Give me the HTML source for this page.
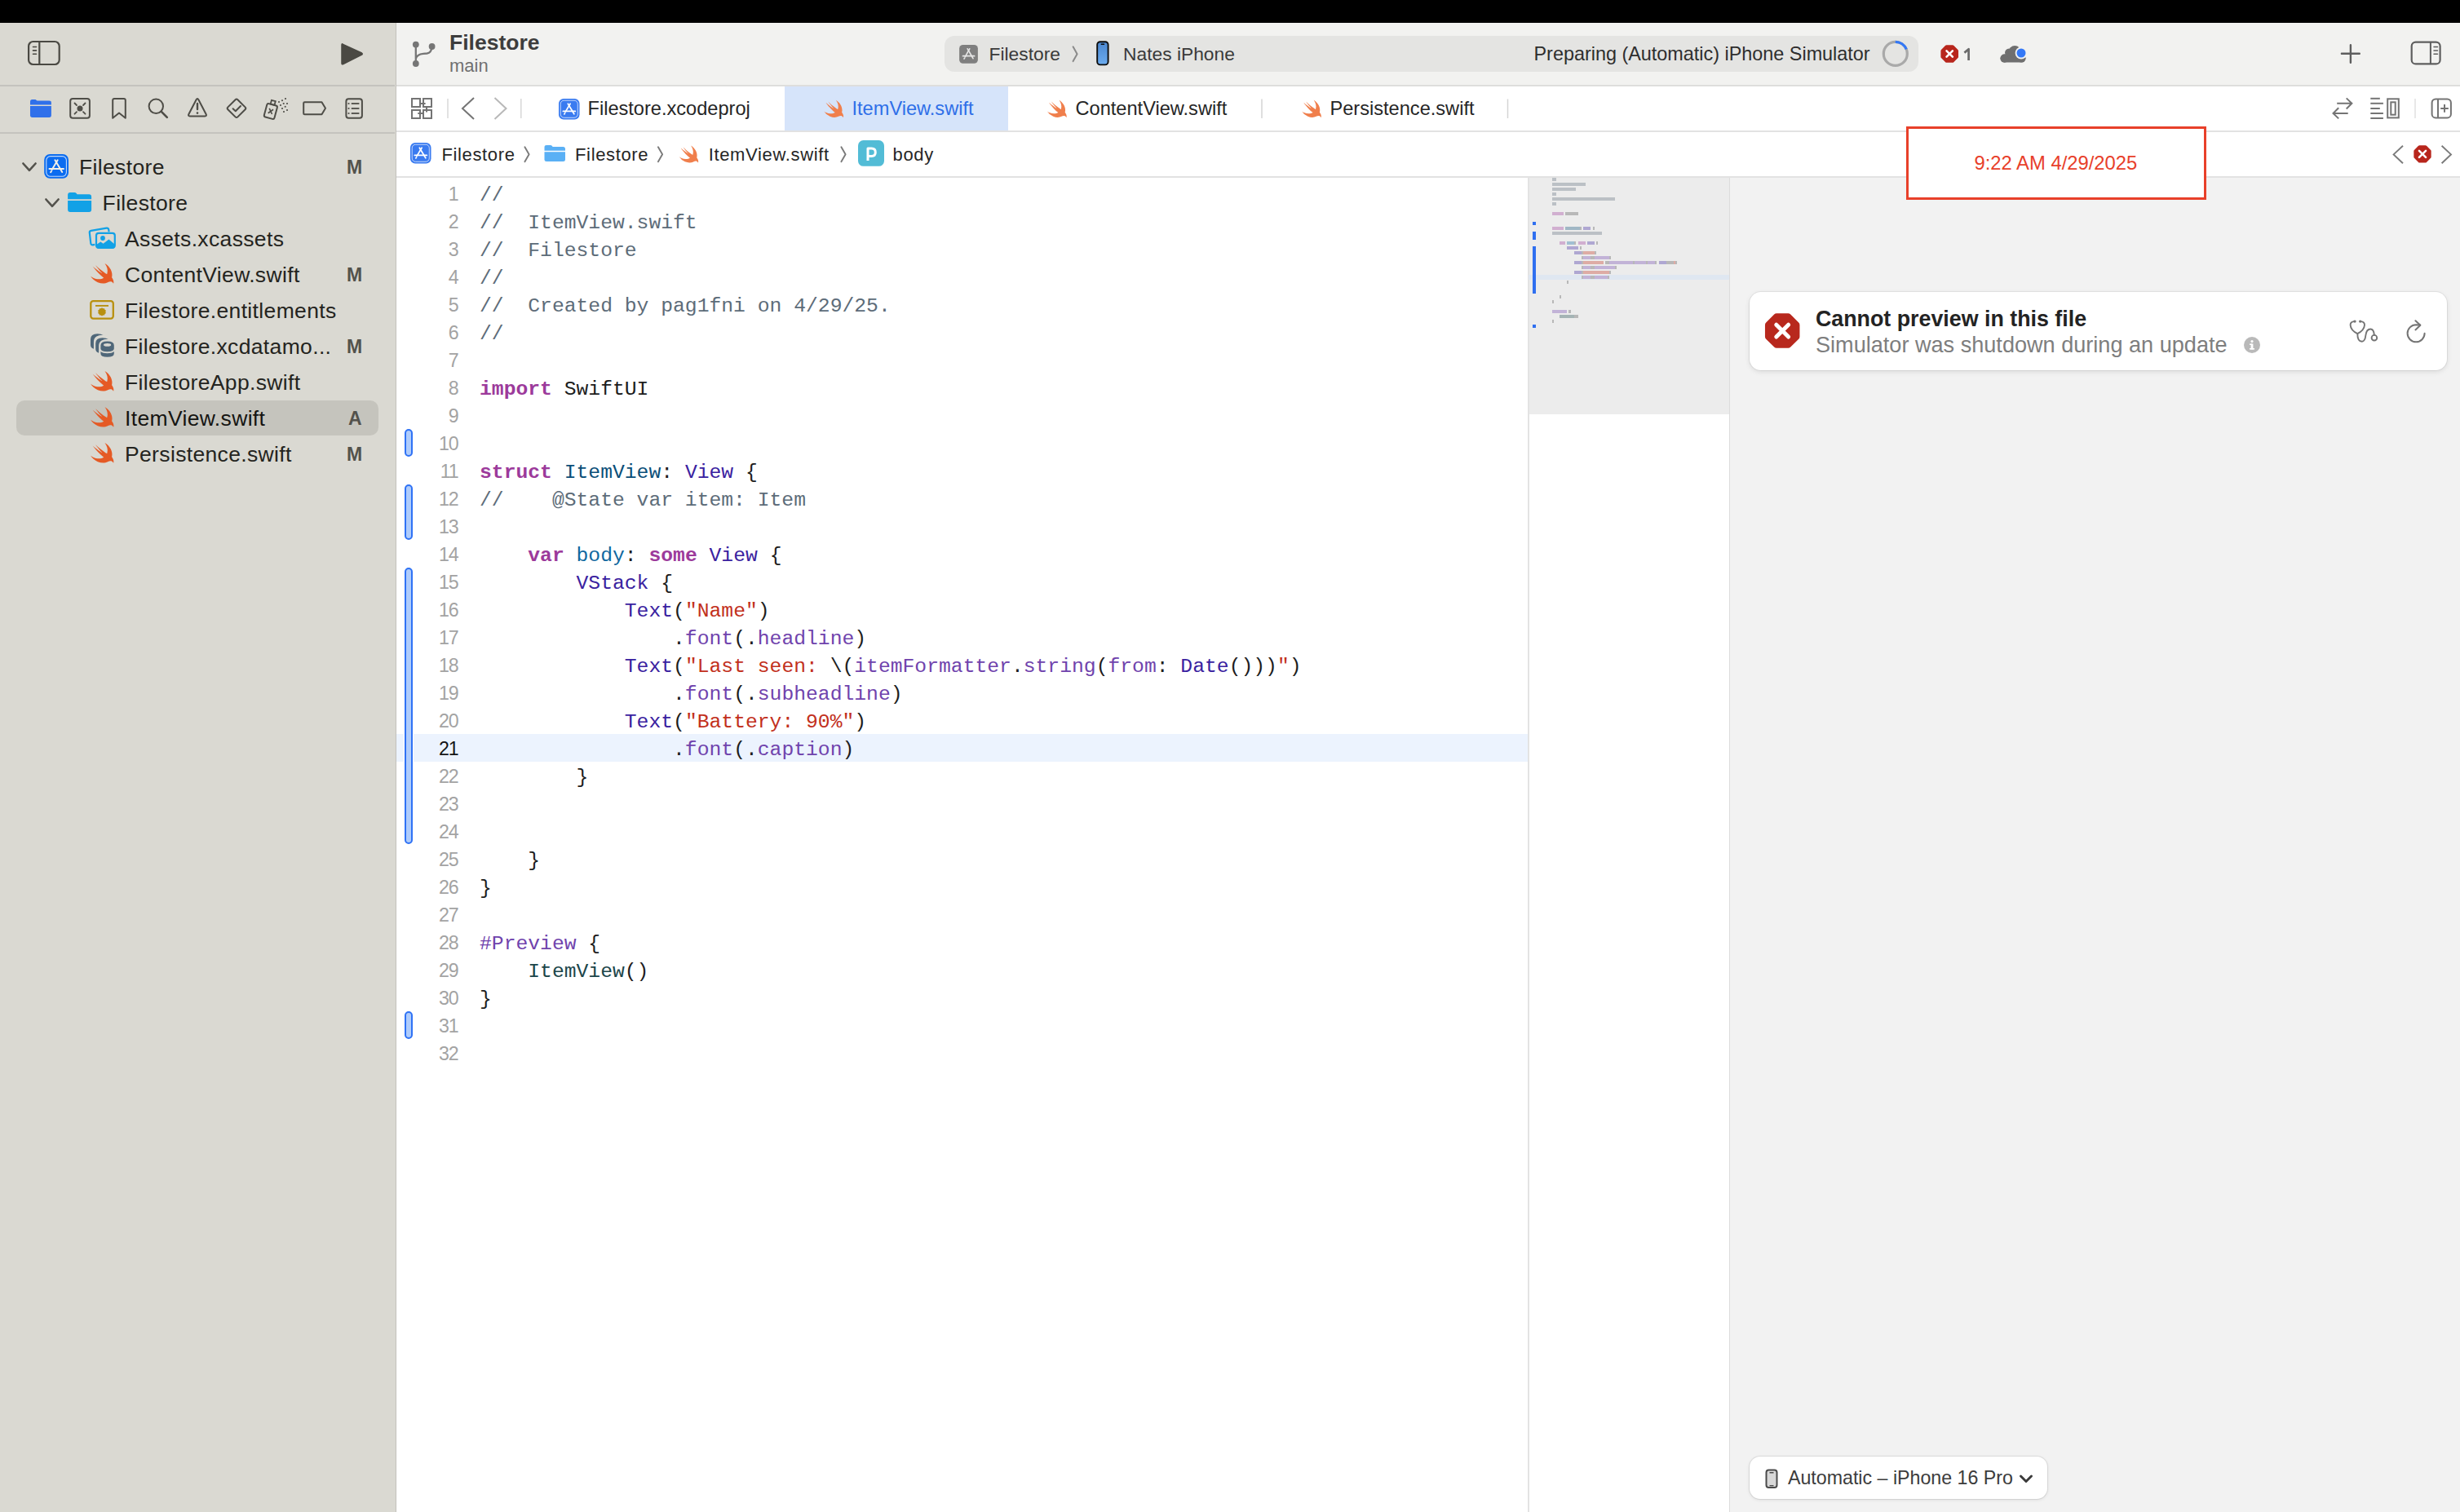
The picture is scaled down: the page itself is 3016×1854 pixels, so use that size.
<!DOCTYPE html><html><head><meta charset="utf-8"><style>
html,body{margin:0;padding:0;width:3016px;height:1854px;overflow:hidden;background:#fff;}
.t{position:absolute;white-space:pre;}
.s{font-family:"Liberation Sans",sans-serif;}
.m{font-family:"Liberation Mono",monospace;}
body{font-family:"Liberation Sans",sans-serif;}
svg{overflow:visible}
</style></head><body>
<div style="position:absolute;left:0px;top:0px;width:3016px;height:28px;background:#000;"></div>
<div style="position:absolute;left:0px;top:28px;width:485px;height:1826px;background:#dad9d2;"></div>
<div style="position:absolute;left:485px;top:28px;width:1px;height:1826px;background:#c2c1bc;"></div>
<div style="position:absolute;left:0px;top:104px;width:484px;height:2px;background:#c4c3be;"></div>
<div style="position:absolute;left:0px;top:162px;width:484px;height:2px;background:#c4c3be;"></div>
<div style="position:absolute;left:486px;top:28px;width:2530px;height:76px;background:#f2f2f0;"></div>
<div style="position:absolute;left:486px;top:104px;width:2530px;height:2px;background:#dededc;"></div>
<div style="position:absolute;left:486px;top:106px;width:2530px;height:54px;background:#ffffff;"></div>
<div style="position:absolute;left:962px;top:106px;width:274px;height:54px;background:#d6e4fa;"></div>
<div style="position:absolute;left:486px;top:160px;width:2530px;height:2px;background:#e2e2e2;"></div>
<div style="position:absolute;left:486px;top:162px;width:2530px;height:54px;background:#ffffff;"></div>
<div style="position:absolute;left:486px;top:216px;width:2530px;height:2px;background:#e2e2e2;"></div>
<div style="position:absolute;left:486px;top:218px;width:1387px;height:1636px;background:#ffffff;"></div>
<div style="position:absolute;left:1873px;top:218px;width:2px;height:1636px;background:#e3e3e3;"></div>
<div style="position:absolute;left:1875px;top:218px;width:245px;height:290px;background:#ececec;"></div>
<div style="position:absolute;left:1875px;top:508px;width:245px;height:1346px;background:#ffffff;"></div>
<div style="position:absolute;left:2120px;top:218px;width:1px;height:1636px;background:#dcdcdc;"></div>
<div style="position:absolute;left:2121px;top:218px;width:895px;height:1636px;background:#f2f2f2;"></div>
<div style="position:absolute;left:20px;top:490.5px;width:444px;height:43px;background:#c5c4bd;border-radius:10px;"></div>
<div class="t s" style="left:97px;top:191.56px;font-size:26.5px;line-height:26.5px;color:#242420;font-weight:400;letter-spacing:0.35px;">Filestore</div>
<div class="t s" style="left:425px;top:193.52px;font-size:23px;line-height:23px;color:#53524c;font-weight:700;">M</div>
<div class="t s" style="left:125.6px;top:235.56px;font-size:26.5px;line-height:26.5px;color:#242420;font-weight:400;letter-spacing:0.35px;">Filestore</div>
<div class="t s" style="left:153px;top:279.56px;font-size:26.5px;line-height:26.5px;color:#242420;font-weight:400;letter-spacing:0.35px;">Assets.xcassets</div>
<div class="t s" style="left:153px;top:323.56px;font-size:26.5px;line-height:26.5px;color:#242420;font-weight:400;letter-spacing:0.35px;">ContentView.swift</div>
<div class="t s" style="left:425px;top:325.52px;font-size:23px;line-height:23px;color:#53524c;font-weight:700;">M</div>
<div class="t s" style="left:153px;top:367.56px;font-size:26.5px;line-height:26.5px;color:#242420;font-weight:400;letter-spacing:0.35px;">Filestore.entitlements</div>
<div class="t s" style="left:153px;top:411.56px;font-size:26.5px;line-height:26.5px;color:#242420;font-weight:400;letter-spacing:0.35px;">Filestore.xcdatamo...</div>
<div class="t s" style="left:425px;top:413.52px;font-size:23px;line-height:23px;color:#53524c;font-weight:700;">M</div>
<div class="t s" style="left:153px;top:455.56px;font-size:26.5px;line-height:26.5px;color:#242420;font-weight:400;letter-spacing:0.35px;">FilestoreApp.swift</div>
<div class="t s" style="left:153px;top:499.56px;font-size:26.5px;line-height:26.5px;color:#151512;font-weight:400;letter-spacing:0.35px;">ItemView.swift</div>
<div class="t s" style="left:427px;top:501.52px;font-size:23px;line-height:23px;color:#53524c;font-weight:700;">A</div>
<div class="t s" style="left:153px;top:543.56px;font-size:26.5px;line-height:26.5px;color:#242420;font-weight:400;letter-spacing:0.35px;">Persistence.swift</div>
<div class="t s" style="left:425px;top:545.52px;font-size:23px;line-height:23px;color:#53524c;font-weight:700;">M</div>
<div class="t s" style="left:551px;top:39.06px;font-size:26.5px;line-height:26.5px;color:#3d3d3d;font-weight:700;">Filestore</div>
<div class="t s" style="left:551px;top:70.37px;font-size:22px;line-height:22px;color:#707070;font-weight:400;">main</div>
<div style="position:absolute;left:1158px;top:44px;width:1194px;height:44px;background:#e4e4e2;border-radius:12px;"></div>
<div class="t s" style="left:1212.5px;top:55.19px;font-size:22.8px;line-height:22.8px;color:#3a3a3a;font-weight:400;">Filestore</div>
<div class="t s" style="left:1377px;top:55.19px;font-size:22.8px;line-height:22.8px;color:#3a3a3a;font-weight:400;">Nates iPhone</div>
<div class="t s" style="left:1880.5px;top:54.68px;font-size:23.4px;line-height:23.4px;color:#2e2e2e;font-weight:400;">Preparing (Automatic) iPhone Simulator</div>
<div class="t s" style="left:720.5px;top:121.52px;font-size:23.6px;line-height:23.6px;color:#262626;font-weight:400;">Filestore.xcodeproj</div>
<div class="t s" style="left:1044.5px;top:121.52px;font-size:23.6px;line-height:23.6px;color:#2f6fe8;font-weight:400;">ItemView.swift</div>
<div class="t s" style="left:1318.5px;top:121.52px;font-size:23.6px;line-height:23.6px;color:#262626;font-weight:400;">ContentView.swift</div>
<div class="t s" style="left:1630.5px;top:121.52px;font-size:23.6px;line-height:23.6px;color:#262626;font-weight:400;">Persistence.swift</div>
<div class="t s" style="left:541.4px;top:178.87px;font-size:22px;line-height:22px;color:#262626;font-weight:400;letter-spacing:0.65px;">Filestore</div>
<div class="t s" style="left:705px;top:178.87px;font-size:22px;line-height:22px;color:#262626;font-weight:400;letter-spacing:0.65px;">Filestore</div>
<div class="t s" style="left:868.7px;top:178.87px;font-size:22px;line-height:22px;color:#262626;font-weight:400;letter-spacing:0.65px;">ItemView.swift</div>
<div class="t s" style="left:1094.5px;top:178.87px;font-size:22px;line-height:22px;color:#262626;font-weight:400;letter-spacing:0.65px;">body</div>
<div style="position:absolute;left:486px;top:900px;width:9px;height:34px;background:#ecf3fe;"></div>
<div style="position:absolute;left:507px;top:900px;width:1366px;height:34px;background:#ecf3fe;"></div>
<div class="t m" style="left:588px;top:227.08px;font-size:24.7px;line-height:24.7px;color:#1d1d1d;font-weight:400;"><span style="color:#5d6c79;">//</span></div>
<div class="t s" style="left:461.5px;width:100px;text-align:right;top:227.35px;font-size:23.2px;line-height:23.2px;letter-spacing:-1.2px;color:#a3a3a3">1</div>
<div class="t m" style="left:588px;top:261.08px;font-size:24.7px;line-height:24.7px;color:#1d1d1d;font-weight:400;"><span style="color:#5d6c79;">//  ItemView.swift</span></div>
<div class="t s" style="left:461.5px;width:100px;text-align:right;top:261.35px;font-size:23.2px;line-height:23.2px;letter-spacing:-1.2px;color:#a3a3a3">2</div>
<div class="t m" style="left:588px;top:295.08px;font-size:24.7px;line-height:24.7px;color:#1d1d1d;font-weight:400;"><span style="color:#5d6c79;">//  Filestore</span></div>
<div class="t s" style="left:461.5px;width:100px;text-align:right;top:295.35px;font-size:23.2px;line-height:23.2px;letter-spacing:-1.2px;color:#a3a3a3">3</div>
<div class="t m" style="left:588px;top:329.08px;font-size:24.7px;line-height:24.7px;color:#1d1d1d;font-weight:400;"><span style="color:#5d6c79;">//</span></div>
<div class="t s" style="left:461.5px;width:100px;text-align:right;top:329.35px;font-size:23.2px;line-height:23.2px;letter-spacing:-1.2px;color:#a3a3a3">4</div>
<div class="t m" style="left:588px;top:363.08px;font-size:24.7px;line-height:24.7px;color:#1d1d1d;font-weight:400;"><span style="color:#5d6c79;">//  Created by pag1fni on 4/29/25.</span></div>
<div class="t s" style="left:461.5px;width:100px;text-align:right;top:363.35px;font-size:23.2px;line-height:23.2px;letter-spacing:-1.2px;color:#a3a3a3">5</div>
<div class="t m" style="left:588px;top:397.08px;font-size:24.7px;line-height:24.7px;color:#1d1d1d;font-weight:400;"><span style="color:#5d6c79;">//</span></div>
<div class="t s" style="left:461.5px;width:100px;text-align:right;top:397.35px;font-size:23.2px;line-height:23.2px;letter-spacing:-1.2px;color:#a3a3a3">6</div>
<div class="t m" style="left:588px;top:431.08px;font-size:24.7px;line-height:24.7px;color:#1d1d1d;font-weight:400;"></div>
<div class="t s" style="left:461.5px;width:100px;text-align:right;top:431.35px;font-size:23.2px;line-height:23.2px;letter-spacing:-1.2px;color:#a3a3a3">7</div>
<div class="t m" style="left:588px;top:465.08px;font-size:24.7px;line-height:24.7px;color:#1d1d1d;font-weight:400;"><span style="color:#9c3a9b;font-weight:700;">import</span> SwiftUI</div>
<div class="t s" style="left:461.5px;width:100px;text-align:right;top:465.35px;font-size:23.2px;line-height:23.2px;letter-spacing:-1.2px;color:#a3a3a3">8</div>
<div class="t m" style="left:588px;top:499.08px;font-size:24.7px;line-height:24.7px;color:#1d1d1d;font-weight:400;"></div>
<div class="t s" style="left:461.5px;width:100px;text-align:right;top:499.35px;font-size:23.2px;line-height:23.2px;letter-spacing:-1.2px;color:#a3a3a3">9</div>
<div class="t m" style="left:588px;top:533.08px;font-size:24.7px;line-height:24.7px;color:#1d1d1d;font-weight:400;"></div>
<div class="t s" style="left:461.5px;width:100px;text-align:right;top:533.35px;font-size:23.2px;line-height:23.2px;letter-spacing:-1.2px;color:#a3a3a3">10</div>
<div class="t m" style="left:588px;top:567.08px;font-size:24.7px;line-height:24.7px;color:#1d1d1d;font-weight:400;"><span style="color:#9c3a9b;font-weight:700;">struct</span> <span style="color:#0b4f79;">ItemView</span>: <span style="color:#3a22a0;">View</span> {</div>
<div class="t s" style="left:461.5px;width:100px;text-align:right;top:567.35px;font-size:23.2px;line-height:23.2px;letter-spacing:-1.2px;color:#a3a3a3">11</div>
<div class="t m" style="left:588px;top:601.08px;font-size:24.7px;line-height:24.7px;color:#1d1d1d;font-weight:400;"><span style="color:#5d6c79;">//    @State var item: Item</span></div>
<div class="t s" style="left:461.5px;width:100px;text-align:right;top:601.35px;font-size:23.2px;line-height:23.2px;letter-spacing:-1.2px;color:#a3a3a3">12</div>
<div class="t m" style="left:588px;top:635.08px;font-size:24.7px;line-height:24.7px;color:#1d1d1d;font-weight:400;"></div>
<div class="t s" style="left:461.5px;width:100px;text-align:right;top:635.35px;font-size:23.2px;line-height:23.2px;letter-spacing:-1.2px;color:#a3a3a3">13</div>
<div class="t m" style="left:588px;top:669.08px;font-size:24.7px;line-height:24.7px;color:#1d1d1d;font-weight:400;">    <span style="color:#9c3a9b;font-weight:700;">var</span> <span style="color:#0f68a0;">body</span>: <span style="color:#9c3a9b;font-weight:700;">some</span> <span style="color:#3a22a0;">View</span> {</div>
<div class="t s" style="left:461.5px;width:100px;text-align:right;top:669.35px;font-size:23.2px;line-height:23.2px;letter-spacing:-1.2px;color:#a3a3a3">14</div>
<div class="t m" style="left:588px;top:703.08px;font-size:24.7px;line-height:24.7px;color:#1d1d1d;font-weight:400;">        <span style="color:#3a22a0;">VStack</span> {</div>
<div class="t s" style="left:461.5px;width:100px;text-align:right;top:703.35px;font-size:23.2px;line-height:23.2px;letter-spacing:-1.2px;color:#a3a3a3">15</div>
<div class="t m" style="left:588px;top:737.08px;font-size:24.7px;line-height:24.7px;color:#1d1d1d;font-weight:400;">            <span style="color:#3a22a0;">Text</span>(<span style="color:#c2301c;">&quot;Name&quot;</span>)</div>
<div class="t s" style="left:461.5px;width:100px;text-align:right;top:737.35px;font-size:23.2px;line-height:23.2px;letter-spacing:-1.2px;color:#a3a3a3">16</div>
<div class="t m" style="left:588px;top:771.08px;font-size:24.7px;line-height:24.7px;color:#1d1d1d;font-weight:400;">                .<span style="color:#7043ad;">font</span>(.<span style="color:#7043ad;">headline</span>)</div>
<div class="t s" style="left:461.5px;width:100px;text-align:right;top:771.35px;font-size:23.2px;line-height:23.2px;letter-spacing:-1.2px;color:#a3a3a3">17</div>
<div class="t m" style="left:588px;top:805.08px;font-size:24.7px;line-height:24.7px;color:#1d1d1d;font-weight:400;">            <span style="color:#3a22a0;">Text</span>(<span style="color:#c2301c;">&quot;Last seen: </span>\(<span style="color:#7043ad;">itemFormatter</span>.<span style="color:#7043ad;">string</span>(<span style="color:#7043ad;">from</span>: <span style="color:#3a22a0;">Date</span>()))<span style="color:#c2301c;">&quot;</span>)</div>
<div class="t s" style="left:461.5px;width:100px;text-align:right;top:805.35px;font-size:23.2px;line-height:23.2px;letter-spacing:-1.2px;color:#a3a3a3">18</div>
<div class="t m" style="left:588px;top:839.08px;font-size:24.7px;line-height:24.7px;color:#1d1d1d;font-weight:400;">                .<span style="color:#7043ad;">font</span>(.<span style="color:#7043ad;">subheadline</span>)</div>
<div class="t s" style="left:461.5px;width:100px;text-align:right;top:839.35px;font-size:23.2px;line-height:23.2px;letter-spacing:-1.2px;color:#a3a3a3">19</div>
<div class="t m" style="left:588px;top:873.08px;font-size:24.7px;line-height:24.7px;color:#1d1d1d;font-weight:400;">            <span style="color:#3a22a0;">Text</span>(<span style="color:#c2301c;">&quot;Battery: 90%&quot;</span>)</div>
<div class="t s" style="left:461.5px;width:100px;text-align:right;top:873.35px;font-size:23.2px;line-height:23.2px;letter-spacing:-1.2px;color:#a3a3a3">20</div>
<div class="t m" style="left:588px;top:907.08px;font-size:24.7px;line-height:24.7px;color:#1d1d1d;font-weight:400;">                .<span style="color:#7043ad;">font</span>(.<span style="color:#7043ad;">caption</span>)</div>
<div class="t s" style="left:461.5px;width:100px;text-align:right;top:907.35px;font-size:23.2px;line-height:23.2px;letter-spacing:-1.2px;color:#151515">21</div>
<div class="t m" style="left:588px;top:941.08px;font-size:24.7px;line-height:24.7px;color:#1d1d1d;font-weight:400;">        }</div>
<div class="t s" style="left:461.5px;width:100px;text-align:right;top:941.35px;font-size:23.2px;line-height:23.2px;letter-spacing:-1.2px;color:#a3a3a3">22</div>
<div class="t m" style="left:588px;top:975.08px;font-size:24.7px;line-height:24.7px;color:#1d1d1d;font-weight:400;"></div>
<div class="t s" style="left:461.5px;width:100px;text-align:right;top:975.35px;font-size:23.2px;line-height:23.2px;letter-spacing:-1.2px;color:#a3a3a3">23</div>
<div class="t m" style="left:588px;top:1009.08px;font-size:24.7px;line-height:24.7px;color:#1d1d1d;font-weight:400;"></div>
<div class="t s" style="left:461.5px;width:100px;text-align:right;top:1009.35px;font-size:23.2px;line-height:23.2px;letter-spacing:-1.2px;color:#a3a3a3">24</div>
<div class="t m" style="left:588px;top:1043.08px;font-size:24.7px;line-height:24.7px;color:#1d1d1d;font-weight:400;">    }</div>
<div class="t s" style="left:461.5px;width:100px;text-align:right;top:1043.35px;font-size:23.2px;line-height:23.2px;letter-spacing:-1.2px;color:#a3a3a3">25</div>
<div class="t m" style="left:588px;top:1077.08px;font-size:24.7px;line-height:24.7px;color:#1d1d1d;font-weight:400;">}</div>
<div class="t s" style="left:461.5px;width:100px;text-align:right;top:1077.35px;font-size:23.2px;line-height:23.2px;letter-spacing:-1.2px;color:#a3a3a3">26</div>
<div class="t m" style="left:588px;top:1111.08px;font-size:24.7px;line-height:24.7px;color:#1d1d1d;font-weight:400;"></div>
<div class="t s" style="left:461.5px;width:100px;text-align:right;top:1111.35px;font-size:23.2px;line-height:23.2px;letter-spacing:-1.2px;color:#a3a3a3">27</div>
<div class="t m" style="left:588px;top:1145.08px;font-size:24.7px;line-height:24.7px;color:#1d1d1d;font-weight:400;"><span style="color:#7043ad;">#Preview</span> {</div>
<div class="t s" style="left:461.5px;width:100px;text-align:right;top:1145.35px;font-size:23.2px;line-height:23.2px;letter-spacing:-1.2px;color:#a3a3a3">28</div>
<div class="t m" style="left:588px;top:1179.08px;font-size:24.7px;line-height:24.7px;color:#1d1d1d;font-weight:400;">    <span style="color:#1c464a;">ItemView</span>()</div>
<div class="t s" style="left:461.5px;width:100px;text-align:right;top:1179.35px;font-size:23.2px;line-height:23.2px;letter-spacing:-1.2px;color:#a3a3a3">29</div>
<div class="t m" style="left:588px;top:1213.08px;font-size:24.7px;line-height:24.7px;color:#1d1d1d;font-weight:400;">}</div>
<div class="t s" style="left:461.5px;width:100px;text-align:right;top:1213.35px;font-size:23.2px;line-height:23.2px;letter-spacing:-1.2px;color:#a3a3a3">30</div>
<div class="t m" style="left:588px;top:1247.08px;font-size:24.7px;line-height:24.7px;color:#1d1d1d;font-weight:400;"></div>
<div class="t s" style="left:461.5px;width:100px;text-align:right;top:1247.35px;font-size:23.2px;line-height:23.2px;letter-spacing:-1.2px;color:#a3a3a3">31</div>
<div class="t m" style="left:588px;top:1281.08px;font-size:24.7px;line-height:24.7px;color:#1d1d1d;font-weight:400;"></div>
<div class="t s" style="left:461.5px;width:100px;text-align:right;top:1281.35px;font-size:23.2px;line-height:23.2px;letter-spacing:-1.2px;color:#a3a3a3">32</div>
<div style="position:absolute;left:496px;top:526px;width:6px;height:30px;border:2px solid #2f72f5;background:#afccfb;border-radius:5px;"></div>
<div style="position:absolute;left:496px;top:594px;width:6px;height:64px;border:2px solid #2f72f5;background:#afccfb;border-radius:5px;"></div>
<div style="position:absolute;left:496px;top:696px;width:6px;height:335px;border:2px solid #2f72f5;background:#afccfb;border-radius:5px;"></div>
<div style="position:absolute;left:496px;top:1240px;width:6px;height:30px;border:2px solid #2f72f5;background:#afccfb;border-radius:5px;"></div>
<div style="position:absolute;left:2145px;top:358px;width:855px;height:96px;background:#ffffff;border-radius:14px;box-shadow:0 0 0 1px rgba(0,0,0,0.06),0 2px 6px rgba(0,0,0,0.10);"></div>
<div class="t s" style="left:2226px;top:378.31px;font-size:26.8px;line-height:26.8px;color:#232323;font-weight:700;">Cannot preview in this file</div>
<div class="t s" style="left:2226px;top:409.05px;font-size:27.1px;line-height:27.1px;color:#7e7e7e;font-weight:400;">Simulator was shutdown during an update</div>
<svg style="position:absolute;left:2751px;top:412.5px;" width="20" height="20" viewBox="0 0 20 20"><circle cx="10" cy="10" r="10" fill="#b9b9b9"/><rect x="8.6" y="8.5" width="2.8" height="7" fill="#fff"/><rect x="7" y="14" width="6" height="1.6" fill="#fff"/><rect x="7" y="8.5" width="3" height="1.5" fill="#fff"/><circle cx="10" cy="5.6" r="1.6" fill="#fff"/></svg>
<div style="position:absolute;left:2337px;top:155px;width:362px;height:84px;border:3px solid #e8402a;background:#fff;"></div>
<div class="t s" style="left:2420.5px;top:187.85px;font-size:23.8px;line-height:23.8px;color:#e8402a;font-weight:400;">9:22 AM 4/29/2025</div>
<div style="position:absolute;left:2145px;top:1786px;width:365px;height:52px;background:#ffffff;border-radius:13px;box-shadow:0 0 0 1px rgba(0,0,0,0.07),0 1px 4px rgba(0,0,0,0.10);"></div>
<div class="t s" style="left:2192px;top:1800.85px;font-size:23.2px;line-height:23.2px;color:#3c3c3c;font-weight:400;">Automatic – iPhone 16 Pro</div>
<svg style="position:absolute;left:2164px;top:1801px;" width="18" height="26" viewBox="0 0 18 26"><rect x="1.5" y="1.5" width="13" height="21.5" rx="3" fill="#d8d8d8" stroke="#4a4a4a" stroke-width="2"/><rect x="5.5" y="4" width="5" height="1.5" fill="#4a4a4a"/><rect x="5.5" y="20" width="5" height="1.3" fill="#4a4a4a"/></svg>
<svg style="position:absolute;left:2475px;top:1807px;" width="18" height="13" viewBox="0 0 18 13"><path d="M2.5 3 L9 9.5 L15.5 3" fill="none" stroke="#3c3c3c" stroke-width="3" stroke-linecap="round" stroke-linejoin="round"/></svg>
<div style="position:absolute;left:1874px;top:337.0px;width:246px;height:6px;background:#dfe7f1;"></div>
<div style="position:absolute;left:1903.00px;top:218.25px;width:4.50px;height:3.5px;background:#bbc0c5;"></div>
<div style="position:absolute;left:1903.00px;top:224.25px;width:40.50px;height:3.5px;background:#bbc0c5;"></div>
<div style="position:absolute;left:1903.00px;top:230.25px;width:29.25px;height:3.5px;background:#bbc0c5;"></div>
<div style="position:absolute;left:1903.00px;top:236.25px;width:4.50px;height:3.5px;background:#bbc0c5;"></div>
<div style="position:absolute;left:1903.00px;top:242.25px;width:76.50px;height:3.5px;background:#bbc0c5;"></div>
<div style="position:absolute;left:1903.00px;top:248.25px;width:4.50px;height:3.5px;background:#bbc0c5;"></div>
<div style="position:absolute;left:1903.00px;top:260.25px;width:13.50px;height:3.5px;background:#d1afd0;"></div>
<div style="position:absolute;left:1918.75px;top:260.25px;width:15.75px;height:3.5px;background:#b8b8b8;"></div>
<div style="position:absolute;left:1903.00px;top:278.25px;width:13.50px;height:3.5px;background:#d1afd0;"></div>
<div style="position:absolute;left:1918.75px;top:278.25px;width:18.00px;height:3.5px;background:#a0b7c5;"></div>
<div style="position:absolute;left:1936.75px;top:278.25px;width:2.25px;height:3.5px;background:#b8b8b8;"></div>
<div style="position:absolute;left:1941.25px;top:278.25px;width:9.00px;height:3.5px;background:#afa7d2;"></div>
<div style="position:absolute;left:1952.50px;top:278.25px;width:2.25px;height:3.5px;background:#b8b8b8;"></div>
<div style="position:absolute;left:1903.00px;top:284.25px;width:60.75px;height:3.5px;background:#bbc0c5;"></div>
<div style="position:absolute;left:1912.00px;top:296.25px;width:6.75px;height:3.5px;background:#d1afd0;"></div>
<div style="position:absolute;left:1921.00px;top:296.25px;width:9.00px;height:3.5px;background:#a1bfd2;"></div>
<div style="position:absolute;left:1930.00px;top:296.25px;width:2.25px;height:3.5px;background:#b8b8b8;"></div>
<div style="position:absolute;left:1934.50px;top:296.25px;width:9.00px;height:3.5px;background:#d1afd0;"></div>
<div style="position:absolute;left:1945.75px;top:296.25px;width:9.00px;height:3.5px;background:#afa7d2;"></div>
<div style="position:absolute;left:1957.00px;top:296.25px;width:2.25px;height:3.5px;background:#b8b8b8;"></div>
<div style="position:absolute;left:1921.00px;top:302.25px;width:13.50px;height:3.5px;background:#afa7d2;"></div>
<div style="position:absolute;left:1936.75px;top:302.25px;width:2.25px;height:3.5px;background:#b8b8b8;"></div>
<div style="position:absolute;left:1930.00px;top:308.25px;width:9.00px;height:3.5px;background:#afa7d2;"></div>
<div style="position:absolute;left:1939.00px;top:308.25px;width:2.25px;height:3.5px;background:#b8b8b8;"></div>
<div style="position:absolute;left:1941.25px;top:308.25px;width:13.50px;height:3.5px;background:#deaca5;"></div>
<div style="position:absolute;left:1954.75px;top:308.25px;width:2.25px;height:3.5px;background:#b8b8b8;"></div>
<div style="position:absolute;left:1939.00px;top:314.25px;width:2.25px;height:3.5px;background:#b8b8b8;"></div>
<div style="position:absolute;left:1941.25px;top:314.25px;width:9.00px;height:3.5px;background:#c2b3d7;"></div>
<div style="position:absolute;left:1950.25px;top:314.25px;width:4.50px;height:3.5px;background:#b8b8b8;"></div>
<div style="position:absolute;left:1954.75px;top:314.25px;width:18.00px;height:3.5px;background:#c2b3d7;"></div>
<div style="position:absolute;left:1972.75px;top:314.25px;width:2.25px;height:3.5px;background:#b8b8b8;"></div>
<div style="position:absolute;left:1930.00px;top:320.25px;width:9.00px;height:3.5px;background:#afa7d2;"></div>
<div style="position:absolute;left:1939.00px;top:320.25px;width:2.25px;height:3.5px;background:#b8b8b8;"></div>
<div style="position:absolute;left:1941.25px;top:320.25px;width:24.75px;height:3.5px;background:#deaca5;"></div>
<div style="position:absolute;left:1968.25px;top:320.25px;width:4.50px;height:3.5px;background:#b8b8b8;"></div>
<div style="position:absolute;left:1972.75px;top:320.25px;width:29.25px;height:3.5px;background:#c2b3d7;"></div>
<div style="position:absolute;left:2002.00px;top:320.25px;width:2.25px;height:3.5px;background:#b8b8b8;"></div>
<div style="position:absolute;left:2004.25px;top:320.25px;width:13.50px;height:3.5px;background:#c2b3d7;"></div>
<div style="position:absolute;left:2017.75px;top:320.25px;width:2.25px;height:3.5px;background:#b8b8b8;"></div>
<div style="position:absolute;left:2020.00px;top:320.25px;width:9.00px;height:3.5px;background:#c2b3d7;"></div>
<div style="position:absolute;left:2029.00px;top:320.25px;width:2.25px;height:3.5px;background:#b8b8b8;"></div>
<div style="position:absolute;left:2033.50px;top:320.25px;width:9.00px;height:3.5px;background:#afa7d2;"></div>
<div style="position:absolute;left:2042.50px;top:320.25px;width:9.00px;height:3.5px;background:#b8b8b8;"></div>
<div style="position:absolute;left:2051.50px;top:320.25px;width:2.25px;height:3.5px;background:#deaca5;"></div>
<div style="position:absolute;left:2053.75px;top:320.25px;width:2.25px;height:3.5px;background:#b8b8b8;"></div>
<div style="position:absolute;left:1939.00px;top:326.25px;width:2.25px;height:3.5px;background:#b8b8b8;"></div>
<div style="position:absolute;left:1941.25px;top:326.25px;width:9.00px;height:3.5px;background:#c2b3d7;"></div>
<div style="position:absolute;left:1950.25px;top:326.25px;width:4.50px;height:3.5px;background:#b8b8b8;"></div>
<div style="position:absolute;left:1954.75px;top:326.25px;width:24.75px;height:3.5px;background:#c2b3d7;"></div>
<div style="position:absolute;left:1979.50px;top:326.25px;width:2.25px;height:3.5px;background:#b8b8b8;"></div>
<div style="position:absolute;left:1930.00px;top:332.25px;width:9.00px;height:3.5px;background:#afa7d2;"></div>
<div style="position:absolute;left:1939.00px;top:332.25px;width:2.25px;height:3.5px;background:#b8b8b8;"></div>
<div style="position:absolute;left:1941.25px;top:332.25px;width:31.50px;height:3.5px;background:#deaca5;"></div>
<div style="position:absolute;left:1972.75px;top:332.25px;width:2.25px;height:3.5px;background:#b8b8b8;"></div>
<div style="position:absolute;left:1939.00px;top:338.25px;width:2.25px;height:3.5px;background:#b8b8b8;"></div>
<div style="position:absolute;left:1941.25px;top:338.25px;width:9.00px;height:3.5px;background:#c2b3d7;"></div>
<div style="position:absolute;left:1950.25px;top:338.25px;width:4.50px;height:3.5px;background:#b8b8b8;"></div>
<div style="position:absolute;left:1954.75px;top:338.25px;width:15.75px;height:3.5px;background:#c2b3d7;"></div>
<div style="position:absolute;left:1970.50px;top:338.25px;width:2.25px;height:3.5px;background:#b8b8b8;"></div>
<div style="position:absolute;left:1921.00px;top:344.25px;width:2.25px;height:3.5px;background:#b8b8b8;"></div>
<div style="position:absolute;left:1912.00px;top:362.25px;width:2.25px;height:3.5px;background:#b8b8b8;"></div>
<div style="position:absolute;left:1903.00px;top:368.25px;width:2.25px;height:3.5px;background:#b8b8b8;"></div>
<div style="position:absolute;left:1903.00px;top:380.25px;width:18.00px;height:3.5px;background:#c2b3d7;"></div>
<div style="position:absolute;left:1923.25px;top:380.25px;width:2.25px;height:3.5px;background:#b8b8b8;"></div>
<div style="position:absolute;left:1912.00px;top:386.25px;width:18.00px;height:3.5px;background:#a5b4b5;"></div>
<div style="position:absolute;left:1930.00px;top:386.25px;width:4.50px;height:3.5px;background:#b8b8b8;"></div>
<div style="position:absolute;left:1903.00px;top:392.25px;width:2.25px;height:3.5px;background:#b8b8b8;"></div>
<div style="position:absolute;left:1879px;top:272.25px;width:4px;height:3.5px;background:#2f6ff0;"></div>
<div style="position:absolute;left:1879px;top:284.25px;width:4px;height:9.5px;background:#2f6ff0;"></div>
<div style="position:absolute;left:1879px;top:302.25px;width:4px;height:57.5px;background:#2f6ff0;"></div>
<div style="position:absolute;left:1879px;top:398.25px;width:4px;height:3.5px;background:#2f6ff0;"></div>
<svg style="position:absolute;left:0;top:0" width="3016" height="1854" viewBox="0 0 3016 1854"><g fill="none" stroke="#4a4943" stroke-width="2.2"><rect x="35.1" y="51" width="37.6" height="28" rx="5.5"/><line x1="48.3" y1="51" x2="48.3" y2="79"/></g><g stroke="#4a4943" stroke-width="1.6" stroke-linecap="round"><line x1="40.5" y1="57.5" x2="44.5" y2="57.5"/><line x1="40.5" y1="61.9" x2="44.5" y2="61.9"/><line x1="40.5" y1="66.3" x2="44.5" y2="66.3"/></g><path d="M420.5 54.5 Q419 53 419 55 L419 77.5 Q419 79.5 420.8 78.5 L443.5 67.2 Q445 66 443.5 65 Z" fill="#4a4943" stroke="#4a4943" stroke-width="1.5" stroke-linejoin="round"/><g fill="#767676"><circle cx="509.8" cy="54.6" r="3.9"/><circle cx="509.8" cy="78" r="3.9"/><circle cx="529.6" cy="57" r="3.9"/></g><path d="M509.8 54.6 L509.8 78 M509.8 72 Q511 66.5 519 65.8 L523.5 65.5 Q529 65 529.6 57" fill="none" stroke="#767676" stroke-width="2.3"/><path d="M37 124.5 Q37 121.9 39.5 121.9 L43.5 121.9 L45.5 123.6 L60.3 123.6 Q62.9 123.6 62.9 126 L62.9 128.6 L37 128.6 Z M37 130 L62.9 130 L62.9 141.3 Q62.9 144 60.3 144 L39.7 144 Q37 144 37 141.3 Z" fill="#3070ea"/><g fill="none" stroke="#4e4d47" stroke-width="2"><rect x="86.2" y="121" width="23.7" height="23.8" rx="3"/></g><circle cx="98" cy="133.1" r="3.5" fill="#4e4d47"/><g stroke="#4e4d47" stroke-width="1.8" stroke-linecap="round"><line x1="91.5" y1="126.5" x2="94" y2="129"/><line x1="104.5" y1="126.5" x2="102" y2="129"/><line x1="91.5" y1="139.7" x2="94" y2="137.2"/><line x1="104.5" y1="139.7" x2="102" y2="137.2"/></g><path d="M138.2 144.8 L138.2 123 Q138.2 121 140.2 121 L151.8 121 Q153.8 121 153.8 123 L153.8 144.8 L146 138.5 Z" fill="none" stroke="#4e4d47" stroke-width="2" stroke-linejoin="round"/><circle cx="191.3" cy="130.3" r="8.7" fill="none" stroke="#4e4d47" stroke-width="2"/><line x1="197.6" y1="136.6" x2="204.8" y2="143.8" stroke="#4e4d47" stroke-width="2.6" stroke-linecap="round"/><path d="M240.6 122.2 Q242 119.8 243.4 122.2 L252.6 140 Q253.8 142.4 251.2 142.4 L232.8 142.4 Q230.2 142.4 231.4 140 Z" fill="none" stroke="#4e4d47" stroke-width="2" stroke-linejoin="round"/><path d="M242 127 L242 134" stroke="#4e4d47" stroke-width="2.4" stroke-linecap="round"/><circle cx="242" cy="138.6" r="1.3" fill="#4e4d47"/><path d="M288.6 122.2 Q290 120.8 291.4 122.2 L300.6 131.4 Q302 132.8 300.6 134.2 L291.4 143.4 Q290 144.8 288.6 143.4 L279.4 134.2 Q278 132.8 279.4 131.4 Z" fill="none" stroke="#4e4d47" stroke-width="2" stroke-linejoin="round"/><path d="M285.6 133.3 L288.8 136.3 L295 130" fill="none" stroke="#4e4d47" stroke-width="2" stroke-linecap="round" stroke-linejoin="round"/><g transform="rotate(15 332 136)"><rect x="325.5" y="128" width="13" height="17" rx="2" fill="none" stroke="#4e4d47" stroke-width="2"/><rect x="329.5" y="123" width="5" height="5" fill="none" stroke="#4e4d47" stroke-width="1.8"/><path d="M329.5 133.5 L334.5 139.5 M334.5 133.5 L329.5 139.5" stroke="#4e4d47" stroke-width="1.6"/></g><g fill="#4e4d47"><rect x="349.1" y="120.1" width="1.8" height="1.8"/><rect x="345.1" y="122.3" width="1.8" height="1.8"/><rect x="341.1" y="124.1" width="1.8" height="1.8"/><rect x="346.8" y="126.1" width="1.8" height="1.8"/><rect x="351.1" y="126.1" width="1.8" height="1.8"/><rect x="343.1" y="128.1" width="1.8" height="1.8"/><rect x="348.8" y="129.9" width="1.8" height="1.8"/><rect x="345.1" y="132.1" width="1.8" height="1.8"/><rect x="351.1" y="134.1" width="1.8" height="1.8"/><rect x="347.1" y="136.1" width="1.8" height="1.8"/></g><path d="M373.5 125.2 L394.5 125.2 L399 132.8 L394.5 140.3 L373.5 140.3 Q372.2 140.3 372.2 139 L372.2 126.5 Q372.2 125.2 373.5 125.2 Z" fill="none" stroke="#4e4d47" stroke-width="2" stroke-linejoin="round"/><rect x="424.4" y="121.3" width="19.5" height="23.4" rx="3" fill="none" stroke="#4e4d47" stroke-width="2"/><g stroke="#4e4d47" stroke-width="1.8"><line x1="430.8" y1="127" x2="440.4" y2="127"/><line x1="430.8" y1="133" x2="440.4" y2="133"/><line x1="430.8" y1="139" x2="440.4" y2="139"/></g><g fill="#4e4d47"><rect x="426.6" y="126.1" width="1.8" height="1.8"/><rect x="426.6" y="132.1" width="1.8" height="1.8"/><rect x="426.6" y="138.1" width="1.8" height="1.8"/></g><path d="M28.4 200.5 L36 208.89999999999998 L43.6 200.5" fill="none" stroke="#53524c" stroke-width="2.6" stroke-linecap="round" stroke-linejoin="round"/><g transform="translate(54.2 189) scale(0.9933)"><rect x="0" y="0" width="30" height="30" rx="7" fill="#0b6cf0"/><rect x="2.6" y="2.6" width="24.8" height="24.8" rx="5" fill="none" stroke="rgba(255,255,255,0.75)" stroke-width="1.1"/><g stroke="#f3efe6" stroke-width="2" stroke-linecap="round" fill="none"><path d="M16.6 7.3 L9.3 19.6"/><path d="M13.3 7.3 L22.2 22.1"/><path d="M6.3 18.1 L23.9 18.1"/><path d="M8.8 21.3 L8.0 22.3"/></g></g><path d="M56.4 244.5 L64 252.89999999999998 L71.6 244.5" fill="none" stroke="#53524c" stroke-width="2.6" stroke-linecap="round" stroke-linejoin="round"/><g transform="translate(83.1 236) scale(1.0000 1.0000)"><path d="M0 3 Q0 0 3 0 L8.3 0 Q9.5 0 10.5 1 L11.5 2.3 L26 2.3 Q29 2.3 29 5.3 L29 8.2 L0 8.2 Z" fill="#12a1e6"/><path d="M0 10 L29 10 L29 21 Q29 24 26 24 L3 24 Q0 24 0 21 Z" fill="#12a1e6"/></g><g fill="none" stroke="#12a1e6" stroke-width="2.2" stroke-linejoin="round"><path d="M116.3 299.9 L113.8 300.3 Q111.6 300.6 111.3 298.4 L109.8 285.4 Q109.5 283.2 111.7 282.8 L130.6 279.6 Q132.8 279.3 133.2 281.5 L133.6 284.4"/><rect x="118" y="285.8" width="22.8" height="18" rx="3"/></g><circle cx="126" cy="292" r="2.9" fill="#12a1e6"/><path d="M118.2 300 L123.3 296.6 L126.6 298.8 L133.4 293.6 L140.6 299.5 L140.6 303 Q140.6 304.8 138.8 304.8 L120 304.8 Q118.2 304.8 118.2 303 Z" fill="#12a1e6"/><path d="M13.543 3.41c4.114 2.47 6.545 7.162 5.549 11.131-.024.093-.05.181-.076.272l.002.001c2.062 2.538 1.5 5.258 1.236 4.745-1.072-2.086-3.066-1.568-4.088-1.043a6.803 6.803 0 0 1-.281.158l-.02.012-.002.002c-2.115 1.123-4.957 1.205-7.812-.022a12.568 12.568 0 0 1-5.64-4.838c.649.48 1.35.902 2.097 1.252 3.019 1.414 6.051 1.311 8.197-.002C9.651 12.73 7.101 9.67 5.146 7.191a10.628 10.628 0 0 1-1.005-1.384c2.34 2.142 6.038 4.83 7.365 5.576C8.69 8.408 6.208 4.743 6.324 4.86c4.436 4.47 8.528 6.996 8.528 6.996.154.085.27.154.36.213.085-.215.16-.437.224-.668.708-2.588-.09-5.548-1.893-7.992z" fill="#e55a25" transform="translate(107.33 317.83) scale(1.5621 1.5173)"/><path d="M13.543 3.41c4.114 2.47 6.545 7.162 5.549 11.131-.024.093-.05.181-.076.272l.002.001c2.062 2.538 1.5 5.258 1.236 4.745-1.072-2.086-3.066-1.568-4.088-1.043a6.803 6.803 0 0 1-.281.158l-.02.012-.002.002c-2.115 1.123-4.957 1.205-7.812-.022a12.568 12.568 0 0 1-5.64-4.838c.649.48 1.35.902 2.097 1.252 3.019 1.414 6.051 1.311 8.197-.002C9.651 12.73 7.101 9.67 5.146 7.191a10.628 10.628 0 0 1-1.005-1.384c2.34 2.142 6.038 4.83 7.365 5.576C8.69 8.408 6.208 4.743 6.324 4.86c4.436 4.47 8.528 6.996 8.528 6.996.154.085.27.154.36.213.085-.215.16-.437.224-.668.708-2.588-.09-5.548-1.893-7.992z" fill="#e55a25" transform="translate(107.33 449.83) scale(1.5621 1.5173)"/><path d="M13.543 3.41c4.114 2.47 6.545 7.162 5.549 11.131-.024.093-.05.181-.076.272l.002.001c2.062 2.538 1.5 5.258 1.236 4.745-1.072-2.086-3.066-1.568-4.088-1.043a6.803 6.803 0 0 1-.281.158l-.02.012-.002.002c-2.115 1.123-4.957 1.205-7.812-.022a12.568 12.568 0 0 1-5.64-4.838c.649.48 1.35.902 2.097 1.252 3.019 1.414 6.051 1.311 8.197-.002C9.651 12.73 7.101 9.67 5.146 7.191a10.628 10.628 0 0 1-1.005-1.384c2.34 2.142 6.038 4.83 7.365 5.576C8.69 8.408 6.208 4.743 6.324 4.86c4.436 4.47 8.528 6.996 8.528 6.996.154.085.27.154.36.213.085-.215.16-.437.224-.668.708-2.588-.09-5.548-1.893-7.992z" fill="#e55a25" transform="translate(107.33 493.83) scale(1.5621 1.5173)"/><path d="M13.543 3.41c4.114 2.47 6.545 7.162 5.549 11.131-.024.093-.05.181-.076.272l.002.001c2.062 2.538 1.5 5.258 1.236 4.745-1.072-2.086-3.066-1.568-4.088-1.043a6.803 6.803 0 0 1-.281.158l-.02.012-.002.002c-2.115 1.123-4.957 1.205-7.812-.022a12.568 12.568 0 0 1-5.64-4.838c.649.48 1.35.902 2.097 1.252 3.019 1.414 6.051 1.311 8.197-.002C9.651 12.73 7.101 9.67 5.146 7.191a10.628 10.628 0 0 1-1.005-1.384c2.34 2.142 6.038 4.83 7.365 5.576C8.69 8.408 6.208 4.743 6.324 4.86c4.436 4.47 8.528 6.996 8.528 6.996.154.085.27.154.36.213.085-.215.16-.437.224-.668.708-2.588-.09-5.548-1.893-7.992z" fill="#e55a25" transform="translate(107.33 537.83) scale(1.5621 1.5173)"/><rect x="111.3" y="369.1" width="27.5" height="21.5" rx="3" fill="none" stroke="#b8900f" stroke-width="2.3"/><line x1="117" y1="374.9" x2="133" y2="374.9" stroke="#b8900f" stroke-width="1.9"/><polygon points="125.00,377.20 126.33,378.31 128.06,378.19 128.48,379.87 129.95,380.79 129.30,382.40 129.95,384.01 128.48,384.93 128.06,386.61 126.33,386.49 125.00,387.60 123.67,386.49 121.94,386.61 121.52,384.93 120.05,384.01 120.70,382.40 120.05,380.79 121.52,379.87 121.94,378.19 123.67,378.31" fill="#b8900f"/><g fill="#4f6779"><path d="M111 416 Q111 409.2 119.5 409.2 Q124 409.2 126.5 410.8 Q121.5 410.6 118.4 412.6 Q114.9 414.9 114.9 419 L114.9 427.8 Q111 426.5 111 423 Z"/><path d="M117.2 421 Q117.2 414.2 125.6 414.2 Q130.2 414.2 132.8 415.8 Q127.7 415.6 124.6 417.6 Q121.1 419.9 121.1 424 L121.1 432.8 Q117.2 431.5 117.2 428 Z"/><path d="M123.4 423.6 Q123.4 418.5 131.6 418.5 Q139.8 418.5 139.8 423.6 L139.8 427.6 Q139.8 431.2 131.6 431.2 Q123.4 431.2 123.4 427.6 Z M127 422.9 Q127 424.7 131.6 424.7 Q136.2 424.7 136.2 422.9 Q136.2 421.1 131.6 421.1 Q127 421.1 127 422.9 Z" fill-rule="evenodd"/><path d="M123.4 431 Q126 433.2 131.6 433.2 Q137.2 433.2 139.8 431 L139.8 433.5 Q139.8 437.8 131.6 437.8 Q123.4 437.8 123.4 433.5 Z"/></g><g transform="translate(685 121) scale(0.8500)"><rect x="0" y="0" width="30" height="30" rx="7" fill="#3a7bf0"/><rect x="2.6" y="2.6" width="24.8" height="24.8" rx="5" fill="none" stroke="rgba(255,255,255,0.75)" stroke-width="1.1"/><g stroke="#ffffff" stroke-width="2" stroke-linecap="round" fill="none"><path d="M16.6 7.3 L9.3 19.6"/><path d="M13.3 7.3 L22.2 22.1"/><path d="M6.3 18.1 L23.9 18.1"/><path d="M8.8 21.3 L8.0 22.3"/></g></g><path d="M13.543 3.41c4.114 2.47 6.545 7.162 5.549 11.131-.024.093-.05.181-.076.272l.002.001c2.062 2.538 1.5 5.258 1.236 4.745-1.072-2.086-3.066-1.568-4.088-1.043a6.803 6.803 0 0 1-.281.158l-.02.012-.002.002c-2.115 1.123-4.957 1.205-7.812-.022a12.568 12.568 0 0 1-5.64-4.838c.649.48 1.35.902 2.097 1.252 3.019 1.414 6.051 1.311 8.197-.002C9.651 12.73 7.101 9.67 5.146 7.191a10.628 10.628 0 0 1-1.005-1.384c2.34 2.142 6.038 4.83 7.365 5.576C8.69 8.408 6.208 4.743 6.324 4.86c4.436 4.47 8.528 6.996 8.528 6.996.154.085.27.154.36.213.085-.215.16-.437.224-.668.708-2.588-.09-5.548-1.893-7.992z" fill="#f07f4c" transform="translate(1007.02 118.22) scale(1.3192 1.3138)"/><path d="M13.543 3.41c4.114 2.47 6.545 7.162 5.549 11.131-.024.093-.05.181-.076.272l.002.001c2.062 2.538 1.5 5.258 1.236 4.745-1.072-2.086-3.066-1.568-4.088-1.043a6.803 6.803 0 0 1-.281.158l-.02.012-.002.002c-2.115 1.123-4.957 1.205-7.812-.022a12.568 12.568 0 0 1-5.64-4.838c.649.48 1.35.902 2.097 1.252 3.019 1.414 6.051 1.311 8.197-.002C9.651 12.73 7.101 9.67 5.146 7.191a10.628 10.628 0 0 1-1.005-1.384c2.34 2.142 6.038 4.83 7.365 5.576C8.69 8.408 6.208 4.743 6.324 4.86c4.436 4.47 8.528 6.996 8.528 6.996.154.085.27.154.36.213.085-.215.16-.437.224-.668.708-2.588-.09-5.548-1.893-7.992z" fill="#f07f4c" transform="translate(1280.62 118.22) scale(1.3192 1.3138)"/><path d="M13.543 3.41c4.114 2.47 6.545 7.162 5.549 11.131-.024.093-.05.181-.076.272l.002.001c2.062 2.538 1.5 5.258 1.236 4.745-1.072-2.086-3.066-1.568-4.088-1.043a6.803 6.803 0 0 1-.281.158l-.02.012-.002.002c-2.115 1.123-4.957 1.205-7.812-.022a12.568 12.568 0 0 1-5.64-4.838c.649.48 1.35.902 2.097 1.252 3.019 1.414 6.051 1.311 8.197-.002C9.651 12.73 7.101 9.67 5.146 7.191a10.628 10.628 0 0 1-1.005-1.384c2.34 2.142 6.038 4.83 7.365 5.576C8.69 8.408 6.208 4.743 6.324 4.86c4.436 4.47 8.528 6.996 8.528 6.996.154.085.27.154.36.213.085-.215.16-.437.224-.668.708-2.588-.09-5.548-1.893-7.992z" fill="#f07f4c" transform="translate(1592.82 118.22) scale(1.3192 1.3138)"/><g stroke="#d4d4d4" stroke-width="1.5"><line x1="1547" y1="121.5" x2="1547" y2="145"/><line x1="1848.5" y1="121.5" x2="1848.5" y2="145"/></g><g transform="translate(503 175) scale(0.8500)"><rect x="0" y="0" width="30" height="30" rx="7" fill="#3a7bf0"/><rect x="2.6" y="2.6" width="24.8" height="24.8" rx="5" fill="none" stroke="rgba(255,255,255,0.75)" stroke-width="1.1"/><g stroke="#ffffff" stroke-width="2" stroke-linecap="round" fill="none"><path d="M16.6 7.3 L9.3 19.6"/><path d="M13.3 7.3 L22.2 22.1"/><path d="M6.3 18.1 L23.9 18.1"/><path d="M8.8 21.3 L8.0 22.3"/></g></g><g transform="translate(667.5 178) scale(0.8793 0.8333)"><path d="M0 3 Q0 0 3 0 L8.3 0 Q9.5 0 10.5 1 L11.5 2.3 L26 2.3 Q29 2.3 29 5.3 L29 8.2 L0 8.2 Z" fill="#5ab0f5"/><path d="M0 10 L29 10 L29 21 Q29 24 26 24 L3 24 Q0 24 0 21 Z" fill="#5ab0f5"/></g><path d="M13.543 3.41c4.114 2.47 6.545 7.162 5.549 11.131-.024.093-.05.181-.076.272l.002.001c2.062 2.538 1.5 5.258 1.236 4.745-1.072-2.086-3.066-1.568-4.088-1.043a6.803 6.803 0 0 1-.281.158l-.02.012-.002.002c-2.115 1.123-4.957 1.205-7.812-.022a12.568 12.568 0 0 1-5.64-4.838c.649.48 1.35.902 2.097 1.252 3.019 1.414 6.051 1.311 8.197-.002C9.651 12.73 7.101 9.67 5.146 7.191a10.628 10.628 0 0 1-1.005-1.384c2.34 2.142 6.038 4.83 7.365 5.576C8.69 8.408 6.208 4.743 6.324 4.86c4.436 4.47 8.528 6.996 8.528 6.996.154.085.27.154.36.213.085-.215.16-.437.224-.668.708-2.588-.09-5.548-1.893-7.992z" fill="#f07f4c" transform="translate(829.35 174.06) scale(1.3082 1.3014)"/><rect x="1052" y="172" width="32" height="31.8" rx="6.5" fill="#52bcd6"/><path d="M1064 197 L1064 182 L1068.6 182 Q1073.3 182 1073.3 186.8 Q1073.3 191.5 1068.6 191.5 L1064 191.5" fill="none" stroke="#fff" stroke-width="3" stroke-linejoin="round"/><path d="M643.4 180.3 L648.6 189.2 L643.4 198.2" fill="none" stroke="#7a7a7a" stroke-width="1.9" stroke-linecap="round" stroke-linejoin="round"/><path d="M806.9 180.3 L812.1 189.2 L806.9 198.2" fill="none" stroke="#7a7a7a" stroke-width="1.9" stroke-linecap="round" stroke-linejoin="round"/><path d="M1031.4 180.3 L1036.6 189.2 L1031.4 198.2" fill="none" stroke="#7a7a7a" stroke-width="1.9" stroke-linecap="round" stroke-linejoin="round"/><rect x="1176.1" y="54.9" width="22.8" height="22.9" rx="4.5" fill="#7f7f7f"/><g transform="translate(1176.1 54.9) scale(0.76)" stroke="#e6e6e6" stroke-width="2.2" stroke-linecap="round" fill="none"><path d="M16.6 6.5 L9.3 19.6"/><path d="M13.3 6.5 L22.2 22.1"/><path d="M5.8 18.1 L24.4 18.1"/><path d="M8.6 21.5 L7.8 22.5"/></g><path d="M1315.6 57.3 L1320.6 66.2 L1315.6 75.1" fill="none" stroke="#8a8a8a" stroke-width="2" stroke-linecap="round" stroke-linejoin="round"/><defs><linearGradient id="phg" x1="0" y1="0" x2="0" y2="1"><stop offset="0" stop-color="#4b87cf"/><stop offset="1" stop-color="#6cacef"/></linearGradient></defs><rect x="1345.2" y="51.2" width="13.4" height="28.2" rx="3.6" fill="url(#phg)" stroke="#0d0d0d" stroke-width="1.9"/><rect x="1349.6" y="53.6" width="4.6" height="1.3" rx="0.6" fill="#0d0d0d"/><circle cx="2323.8" cy="65.9" r="14.5" fill="none" stroke="#a9a9a9" stroke-width="3.2"/><path d="M2323.8 51.4 A14.5 14.5 0 0 1 2337.2 60.4" fill="none" stroke="#3478f6" stroke-width="3.2"/><polygon points="2386.53,57.14 2393.87,57.14 2399.06,62.33 2399.06,69.67 2393.87,74.86 2386.53,74.86 2381.34,69.67 2381.34,62.33" fill="#b8261c" stroke="#b8261c" stroke-width="3.89" stroke-linejoin="round"/><path d="M2386.53 62.33 L2393.87 69.67 M2393.87 62.33 L2386.53 69.67" stroke="#fff" stroke-width="2.59" stroke-linecap="round"/><g fill="#6f6f6f"><rect x="2452.5" y="66.5" width="30.8" height="10.1" rx="5"/><circle cx="2457.6" cy="71.6" r="5.1"/><circle cx="2463.2" cy="64.6" r="5.2"/><circle cx="2470.2" cy="63.6" r="7.6"/><circle cx="2478.4" cy="71.4" r="5.2"/></g><circle cx="2478" cy="65" r="7.4" fill="#f2f2f0"/><circle cx="2478" cy="65" r="5.5" fill="#3478f6"/><path d="M2408.4 64.6 L2413.6 60.2 L2413.6 74" fill="none" stroke="#6a6a6a" stroke-width="2.7" stroke-linejoin="round"/><path d="M2870.9 65.8 L2892.8 65.8 M2881.9 55.2 L2881.9 76.8" stroke="#5e5e5e" stroke-width="2.4" stroke-linecap="round"/><rect x="2956.7" y="51.6" width="34.9" height="26.8" rx="5" fill="none" stroke="#5e5e5e" stroke-width="2.2"/><line x1="2979.9" y1="51.6" x2="2979.9" y2="78.4" stroke="#5e5e5e" stroke-width="2"/><g stroke="#5e5e5e" stroke-width="1.5" stroke-linecap="round"><line x1="2984" y1="57.6" x2="2988.5" y2="57.6"/><line x1="2984" y1="62" x2="2988.5" y2="62"/><line x1="2984" y1="66.2" x2="2988.5" y2="66.2"/></g><g fill="none" stroke="#747474" stroke-width="2"><rect x="505" y="121" width="10" height="10"/><rect x="519" y="121" width="10" height="10"/><rect x="505" y="135" width="10" height="10"/><rect x="519" y="135" width="10" height="10"/><path d="M515 126.9 L521.6 126.9 M523 131 L523 137.5 M512.3 139 L519 139"/></g><g stroke="#d8d8d8" stroke-width="1.5"><line x1="549" y1="121" x2="549" y2="145"/><line x1="638.8" y1="121" x2="638.8" y2="145"/></g><path d="M581 120 L567 133 L581 146" fill="none" stroke="#747474" stroke-width="2"/><path d="M606.5 120 L620.5 133 L606.5 146" fill="none" stroke="#b8b8b8" stroke-width="2"/><g fill="none" stroke="#747474" stroke-width="2"><path d="M2865.2 126.8 L2883.4 126.8 M2876.7 120.4 L2883.4 126.8 L2876.7 133.5"/><path d="M2878.7 139 L2860.5 139 M2867.2 132.2 L2860.5 139 L2867.2 145.4"/></g><g stroke="#747474" stroke-width="2"><line x1="2906.3" y1="120.8" x2="2917.8" y2="120.8"/><line x1="2906.3" y1="126.8" x2="2921.9" y2="126.8"/><line x1="2906.3" y1="133" x2="2917.8" y2="133"/><line x1="2906.3" y1="139" x2="2921.9" y2="139"/><line x1="2906.3" y1="145" x2="2921.9" y2="145"/></g><g fill="none" stroke="#747474" stroke-width="2"><rect x="2927.2" y="121.3" width="13.6" height="23.1"/><rect x="2931.3" y="125.3" width="5.4" height="15.4"/></g><line x1="2961" y1="121" x2="2961" y2="145" stroke="#e0e0e0" stroke-width="1.5"/><g fill="none" stroke="#747474" stroke-width="2"><rect x="2981.6" y="121.4" width="23.3" height="23" rx="4.5"/><line x1="2989" y1="121.4" x2="2989" y2="144.4"/><path d="M2992.2 132.9 L3001.8 132.9 M2997 128.1 L2997 137.7"/></g><path d="M2946 178.7 L2934.6 189.4 L2946 200.3" fill="none" stroke="#7a7a7a" stroke-width="1.9"/><polygon points="2966.38,180.17 2973.62,180.17 2978.73,185.28 2978.73,192.52 2973.62,197.63 2966.38,197.63 2961.27,192.52 2961.27,185.28" fill="#b8261c" stroke="#b8261c" stroke-width="3.83" stroke-linejoin="round"/><path d="M2965.95 184.85 L2974.05 192.95 M2974.05 184.85 L2965.95 192.95" stroke="#fff" stroke-width="2.56" stroke-linecap="round"/><path d="M2993.6 178.7 L3005 189.4 L2993.6 200.3" fill="none" stroke="#7a7a7a" stroke-width="1.9"/><polygon points="2178.16,388.60 2192.24,388.60 2202.20,398.56 2202.20,412.64 2192.24,422.60 2178.16,422.60 2168.20,412.64 2168.20,398.56" fill="#b8281d" stroke="#b8281d" stroke-width="8.50" stroke-linejoin="round"/><path d="M2177.76 398.16 L2192.64 413.04 M2192.64 398.16 L2177.76 413.04" stroke="#fff" stroke-width="5.00" stroke-linecap="round"/><g fill="none" stroke="#747474" stroke-width="1.9" stroke-linecap="round"><path d="M2886.5 394.1 Q2881.6 394.3 2881.6 398.5 Q2882 405 2890.3 409.2 Q2898.6 405 2899 398.5 Q2899 394.3 2894.2 394.1"/><path d="M2890.3 409.2 Q2890.3 418.7 2895.8 418.7 Q2899.6 418.7 2900.4 411 Q2901.3 403.5 2906.3 403.5 Q2910.2 403.5 2910.9 410.8"/><circle cx="2910.9" cy="414.2" r="3.3"/></g><g fill="#747474"><circle cx="2887" cy="394.1" r="1.7"/><circle cx="2893.7" cy="394.1" r="1.7"/></g><g fill="none" stroke="#747474" stroke-width="2" stroke-linecap="round" stroke-linejoin="round"><path d="M2967 398.6 L2962.1 398.3 A10.5 10.5 0 1 0 2972.6 408.8"/><path d="M2961.4 393.2 L2967.4 398.7 L2961.4 404.4"/></g></svg>
</body></html>
